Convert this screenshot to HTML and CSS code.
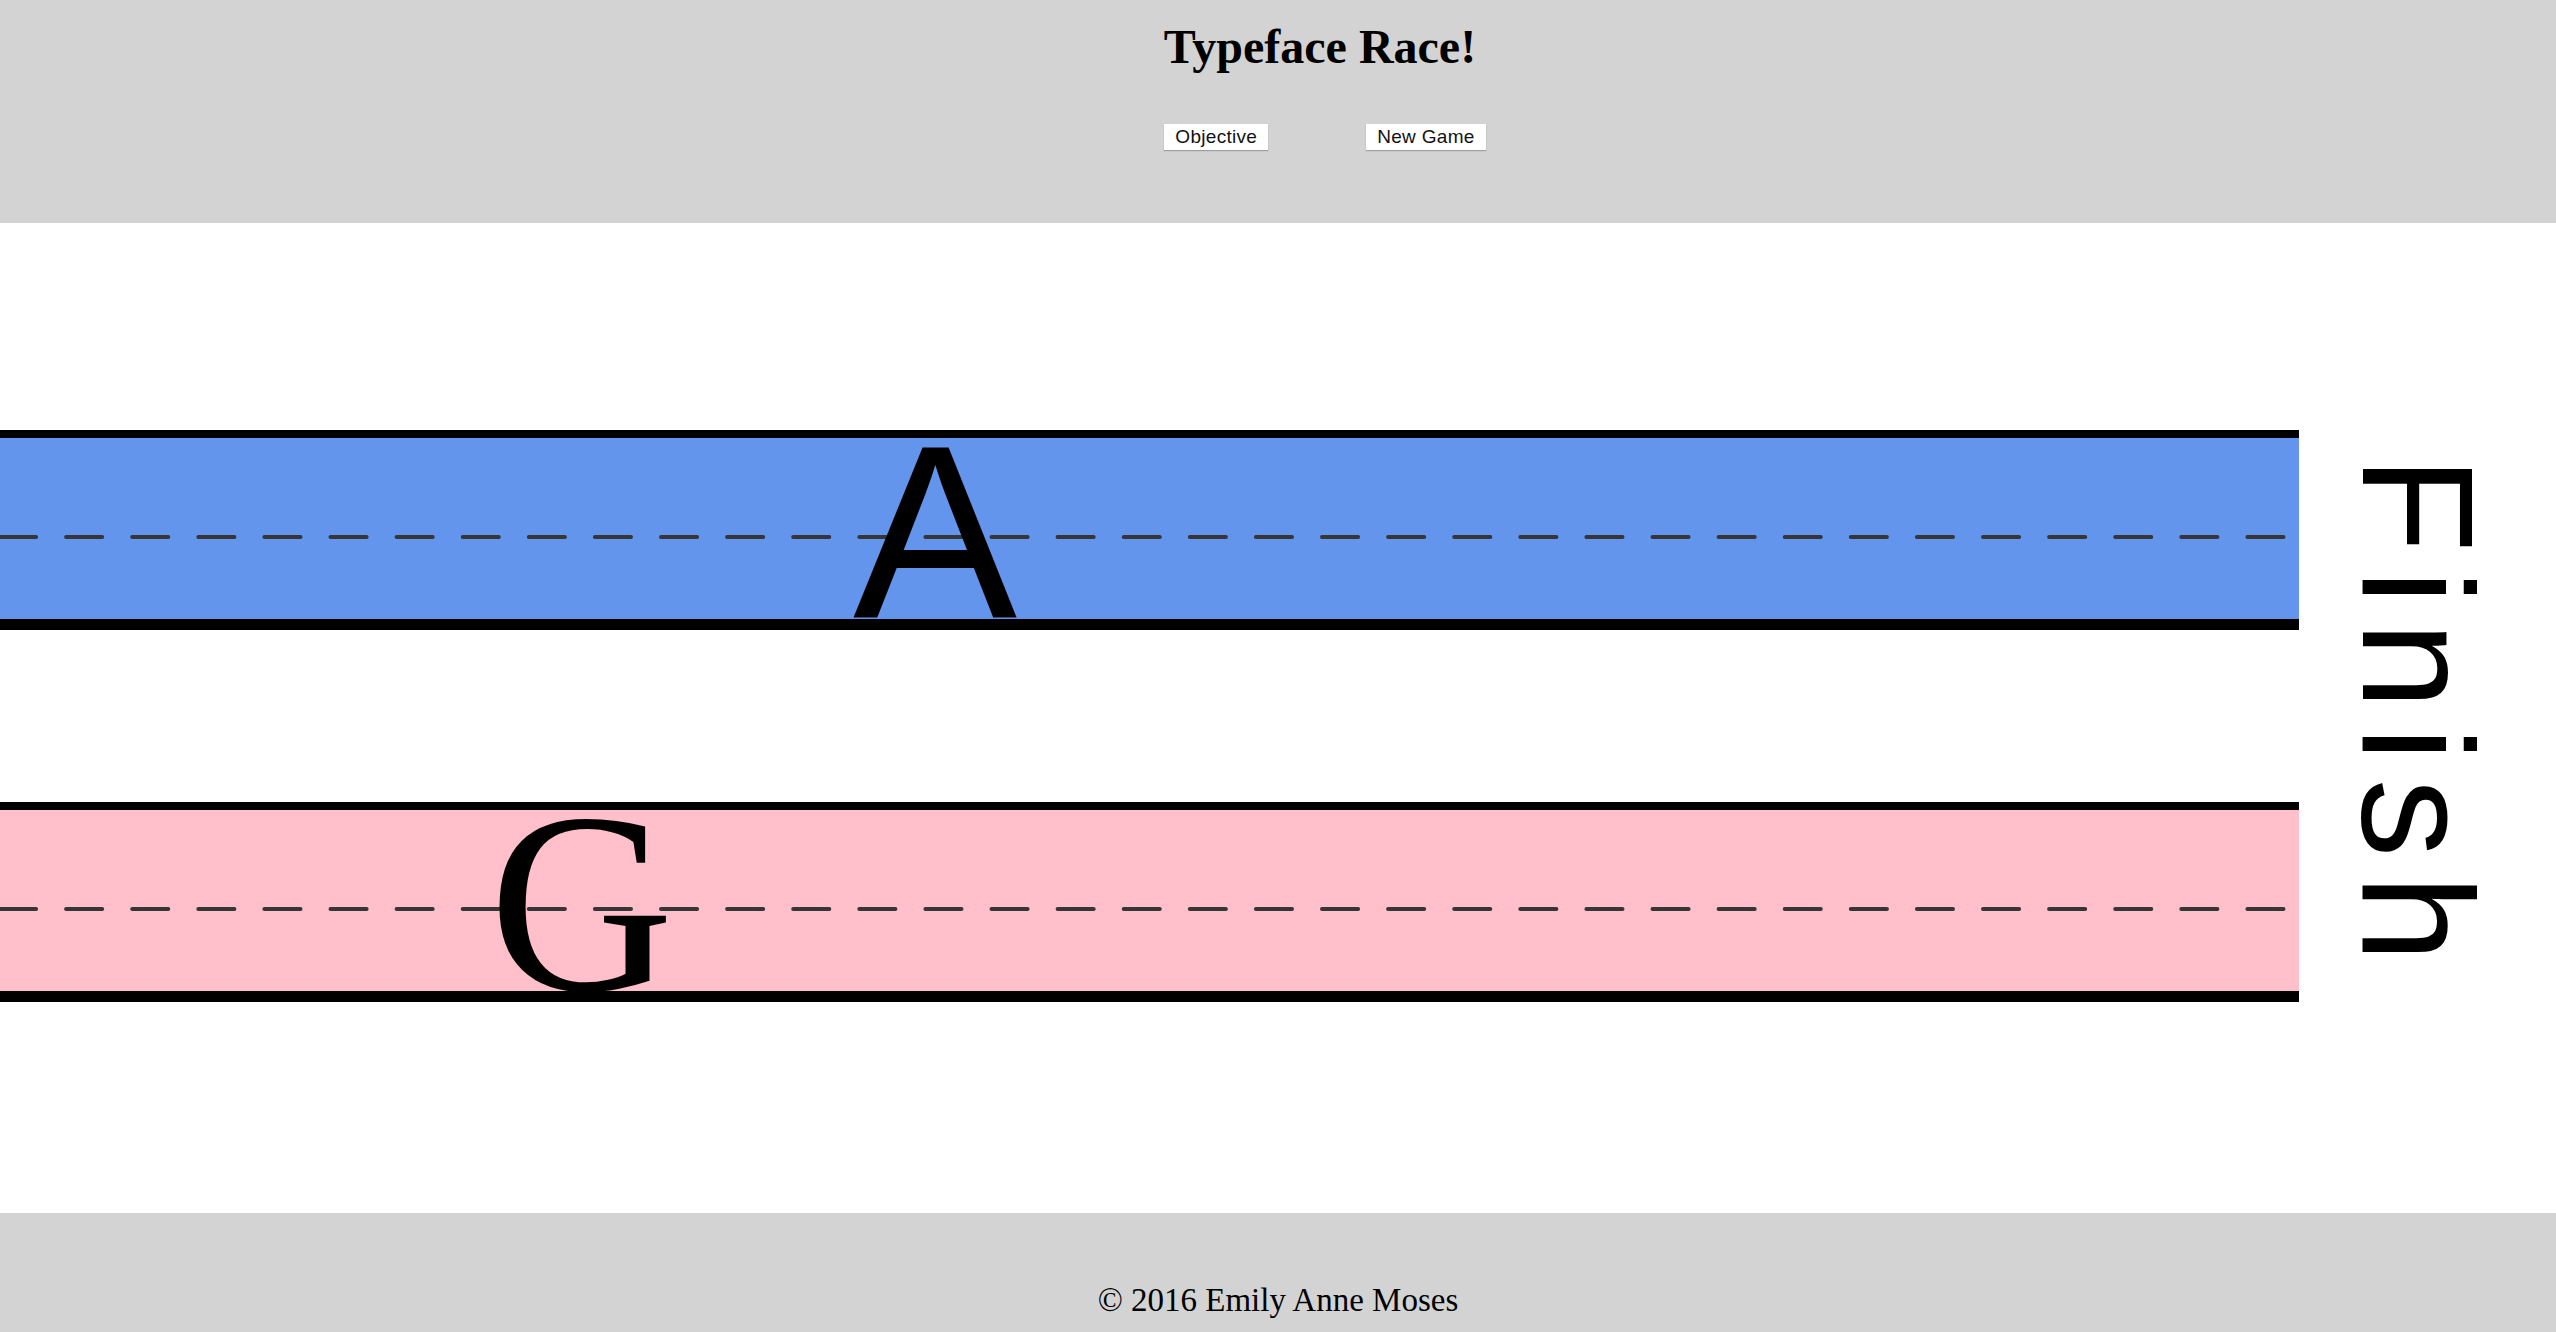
FILE: index.html
```html
<!DOCTYPE html>
<html lang="en">
<head>
    <meta charset="UTF-8">
    <meta name="viewport" content="width=device-width, initial-scale=1.0">
    <title>Typeface Race!</title>
    <link rel="stylesheet" href="styles.css">
</head>
<body>
    <header class="top-bar">
        <h1 class="title">Typeface Race!</h1>
        <div class="controls">
            <button class="btn">Objective</button>
            <button class="btn">New Game</button>
        </div>
    </header>

    <main class="race">
        <div class="track">
            <div class="lane lane-blue">
                <svg class="dashes" width="100%" height="4"><line x1="0" y1="2" x2="100%" y2="2"/></svg>
                <span class="racer racer-sans" style="margin-left: 853px;">A</span>
            </div>
            <div class="lane lane-pink">
                <svg class="dashes" width="100%" height="4"><line x1="0" y1="2" x2="100%" y2="2"/></svg>
                <span class="racer racer-serif" style="margin-left: 489px;">G</span>
            </div>
        </div>
        <div class="finish">
            <span class="finish-text">Finish</span>
        </div>
    </main>

    <footer class="bottom-bar">
        <p>&copy; 2016 Emily Anne Moses</p>
    </footer>
</body>
</html>
```

FILE: styles.css
```css
body {
    margin: 0;
    font-family: "Liberation Serif", serif;
    background-color: #fff;
}
.top-bar {
    height: 223px;
    box-sizing: border-box;
    padding-top: 19px;
    padding-left: 84px;
    background-color: #d3d3d3;
    display: flex;
    flex-direction: column;
    align-items: center;
}
.title {
    margin: 0;
    font-size: 48px;
    font-weight: bold;
}
.controls {
    margin-top: 50px;
    padding-left: 10px;
    display: flex;
    gap: 98px;
}
.btn {
    height: 26px;
    padding: 0 11px;
    border: none;
    background-color: #fff;
    box-shadow: 0 1px 1px rgba(0,0,0,0.25);
    font-family: "Liberation Sans", Arial, sans-serif;
    font-size: 19px;
    letter-spacing: 0.3px;
    color: #111;
    cursor: pointer;
}
.race {
    height: 990px;
    display: flex;
}
.track {
    width: 2299px;
    padding-top: 207px;
    display: flex;
    flex-direction: column;
    gap: 172px;
}
.lane {
    position: relative;
    height: 181px;
    border-top: 8px solid #000;
    border-bottom: 11px solid #000;
    display: flex;
}
.lane-blue {
    background-color: cornflowerblue;
}
.lane-pink {
    background-color: pink;
}
.dashes {
    position: absolute;
    top: 97px;
    left: 0;
}
.dashes line {
    stroke: #363636;
    stroke-width: 4;
    stroke-linecap: round;
    stroke-dasharray: 36.1 30;
}
.racer {
    position: relative;
    line-height: 181px;
    color: #000;
}
.racer-sans {
    font-family: "Liberation Sans", Arial, sans-serif;
    font-size: 246px;
    padding-top: 4px;
}
.racer-serif {
    font-family: "Liberation Serif", serif;
    font-size: 256px;
    padding-top: 3px;
}
.finish {
    flex: 1;
    display: flex;
    align-items: center;
    justify-content: center;
    padding-right: 20px;
}
.finish-text {
    writing-mode: vertical-rl;
    font-family: "Liberation Sans", Arial, sans-serif;
    font-size: 158px;
    letter-spacing: 17px;
    line-height: 1;
}
.bottom-bar {
    height: 119px;
    box-sizing: border-box;
    padding-top: 69px;
    background-color: #d3d3d3;
    text-align: center;
}
.bottom-bar p {
    margin: 0;
    font-size: 33px;
}
```
